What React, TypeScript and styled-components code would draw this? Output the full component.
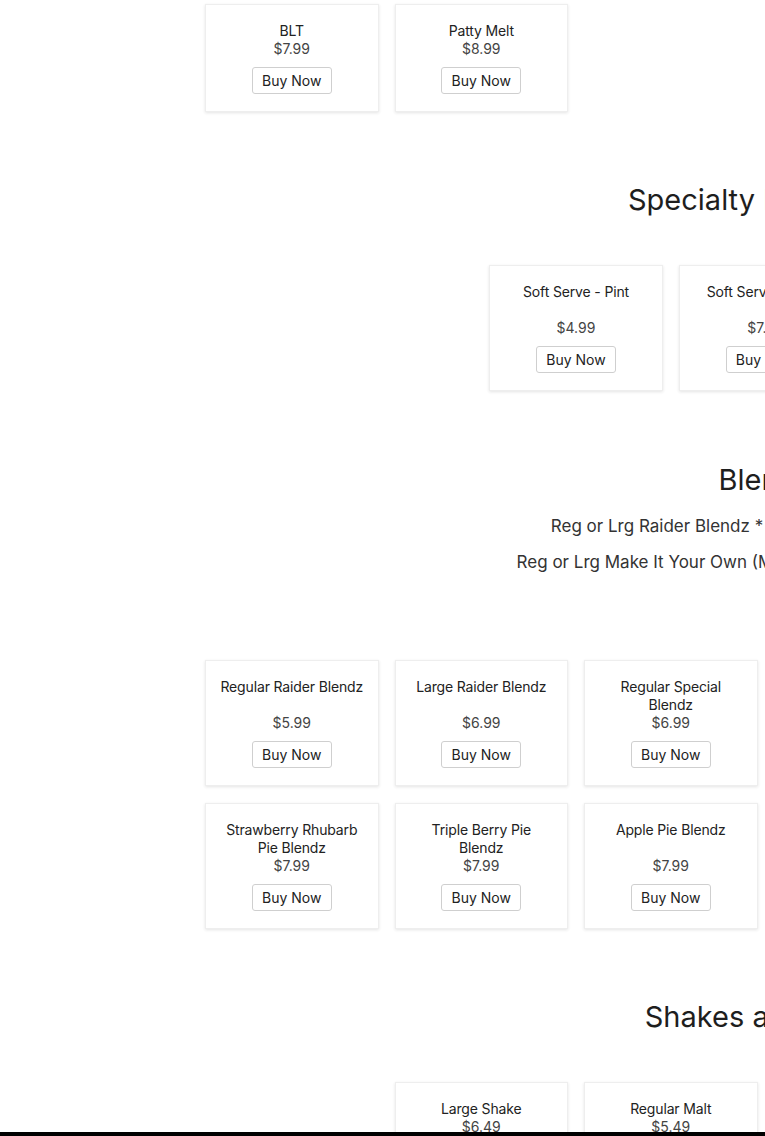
import React from "react";
import styled, { createGlobalStyle } from "styled-components";

const GlobalStyle = createGlobalStyle`
  html, body {
    margin: 0;
    padding: 0;
    background: #ffffff;
  }
  body {
    font-family: "Inter", "Liberation Sans", sans-serif;
    color: #222222;
  }
  * { box-sizing: border-box; }
`;

const Page = styled.main`
  width: 1531px;
  padding-top: 4px;
  display: flex;
  flex-direction: column;
`;

const Section = styled.section<{ $top: number }>`
  display: flex;
  flex-direction: column;
  align-items: center;
  padding-top: ${(p) => p.$top}px;
`;

const HeaderBlock = styled.header`
  display: flex;
  flex-direction: column;
  align-items: center;
  gap: 16px;
  margin-bottom: 47px;
`;

const Heading = styled.h2`
  margin: 0;
  font-size: 29px;
  line-height: 36px;
  font-weight: 400;
  color: #1e1e1e;
  white-space: nowrap;
`;

const DescList = styled.div`
  display: flex;
  flex-direction: column;
  align-items: center;
  gap: 12px;
  padding-bottom: 39px;
`;

const Desc = styled.p`
  margin: 0;
  font-size: 17px;
  line-height: 24px;
  color: #333333;
  white-space: nowrap;
`;

const Grid = styled.div<{ $cols: number }>`
  display: grid;
  grid-template-columns: repeat(${(p) => p.$cols}, 173.5px);
  column-gap: 16px;
  row-gap: 17px;
  justify-content: center;
`;

const Card = styled.article`
  display: flex;
  flex-direction: column;
  align-items: center;
  padding: 17px 12px 17px;
  background: #ffffff;
  border: 1px solid #eeeeee;
  box-shadow: 0 1px 3px rgba(0, 0, 0, 0.11);
  text-align: center;
`;

const Name = styled.div`
  flex: 1;
  font-size: 14px;
  line-height: 18px;
  color: #222222;
  letter-spacing: -0.15px;
`;

const Price = styled.div`
  font-size: 14px;
  line-height: 18px;
  color: #444444;
`;

const BuyButton = styled.button`
  margin-top: 9px;
  height: 27px;
  width: 80px;
  padding: 0;
  background: #ffffff;
  border: 1px solid #cfcfcf;
  border-radius: 3px;
  font-family: inherit;
  font-size: 14px;
  color: #222222;
  cursor: pointer;
`;

const BottomBar = styled.div`
  position: fixed;
  left: 0;
  right: 0;
  bottom: 0;
  height: 4px;
  background: #000000;
`;

type Item = { name: string; price: string };

type SectionData = {
  title?: string;
  desc?: string[];
  items: Item[];
  top: number;
};

const sections: SectionData[] = [
  {
    top: 0,
    items: [
      { name: "BLT", price: "$7.99" },
      { name: "Patty Melt", price: "$8.99" },
    ],
  },
  {
    top: 70,
    title: "Specialty Ice Cream",
    items: [
      { name: "Soft Serve - Pint", price: "$4.99" },
      { name: "Soft Serve - Quart", price: "$7.99" },
      { name: "Soft Serve - Half Gallon Pail", price: "$12.99" },
    ],
  },
  {
    top: 71,
    title: "Blendz",
    desc: [
      "Reg or Lrg Raider Blendz * Oreo, M&M or Butterfinger",
      "Reg or Lrg Make It Your Own (Mix in up to 3 of your toppings!)",
    ],
    items: [
      { name: "Regular Raider Blendz", price: "$5.99" },
      { name: "Large Raider Blendz", price: "$6.99" },
      { name: "Regular Special Blendz", price: "$6.99" },
      { name: "Large Special Blendz", price: "$7.99" },
      { name: "Regular Make It Your Own Blendz", price: "$6.49" },
      { name: "Large Make It Your Own Blendz", price: "$7.49" },
      { name: "Strawberry Rhubarb Pie Blendz", price: "$7.99" },
      { name: "Triple Berry Pie Blendz", price: "$7.99" },
      { name: "Apple Pie Blendz", price: "$7.99" },
      { name: "Cherry Pie Blendz", price: "$7.99" },
    ],
  },
  {
    top: 70,
    title: "Shakes and Malts",
    items: [
      { name: "Large Shake", price: "$6.49" },
      { name: "Regular Malt", price: "$5.49" },
      { name: "Large Malt", price: "$6.49" },
      { name: "Regular Shake", price: "$5.49" },
    ],
  },
];

export default function App() {
  return (
    <>
      <GlobalStyle />
      <Page>
        {sections.map((s, i) => (
          <Section key={i} $top={s.top}>
            {s.title && (
              <HeaderBlock>
                <Heading>{s.title}</Heading>
                {s.desc && (
                  <DescList>
                    {s.desc.map((d) => (
                      <Desc key={d}>{d}</Desc>
                    ))}
                  </DescList>
                )}
              </HeaderBlock>
            )}
            <Grid $cols={i === 0 ? 6 : Math.min(s.items.length, 6)}>
              {s.items.map((it) => (
                <Card key={it.name}>
                  <Name>{it.name}</Name>
                  <Price>{it.price}</Price>
                  <BuyButton type="button">Buy Now</BuyButton>
                </Card>
              ))}
            </Grid>
          </Section>
        ))}
      </Page>
      <BottomBar />
    </>
  );
}
